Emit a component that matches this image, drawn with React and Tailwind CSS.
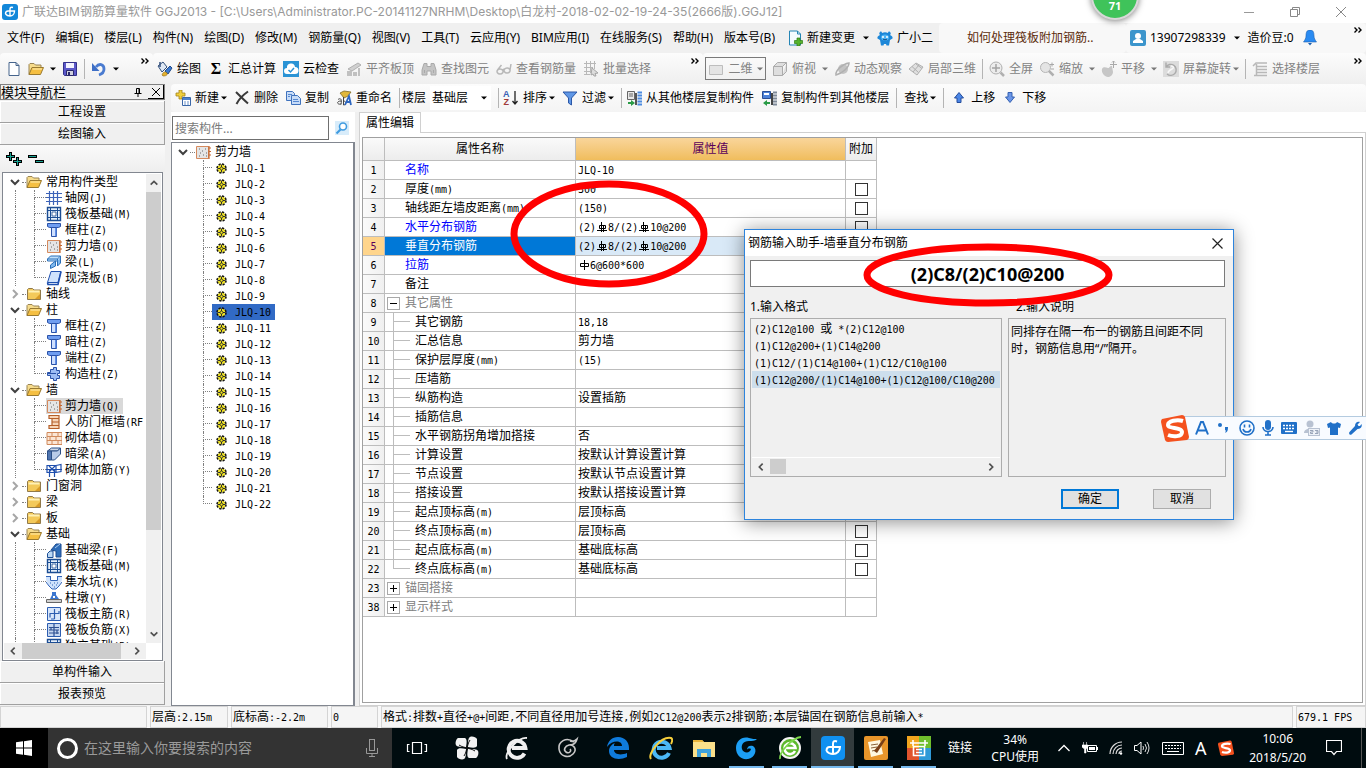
import { useState } from "react";

// 16x16 icons used by the toolbars and the trees
const icons = {
  app: (
    <>
      <rect width="16" height="16" rx="3" fill="#1287d9" />
      <path d="M11 3.500C9 3 8 3.500 8 5v7M3.500 10c0-2 1-3 2.500-3h6.500c0 3-2 5-4.500 5-2 0-3.500-.8-4.500-2" fill="none" stroke="#fff" strokeWidth="1.400" />
    </>
  ),
  page: <path d="M3 1.500h7l3 3v10H3zM10 1.500v3h3" fill="#fff" stroke="#46648c" />,
  folderOpen: (
    <>
      <path d="M1 13.500v-10l1-1h4l1.500 1.500H13v2.500" fill="#f7dc8c" stroke="#9a8454" />
      <path d="M1 13.500 4 6.500h11.500l-3 7z" fill="#f5bf42" stroke="#9a7a30" />
      <path d="M4.500 8H14" stroke="#fff0b8" />
    </>
  ),
  folder: (
    <>
      <path d="M1.500 13.500v-10l1-1h4L8 4h6.500v9.500z" fill="#f3c95a" stroke="#917a4a" />
      <path d="M2.500 5.500h11" stroke="#fff1b5" strokeWidth="2" />
      <path d="M9 13 14 8v5z" fill="#d89b26" />
    </>
  ),
  save: (
    <>
      <path d="M1.500 1.500h13v13h-12l-1-1z" fill="#5b58c9" stroke="#33308a" />
      <path d="M4 2h8v5H4z" fill="#f3f3ff" />
      <path d="M4.500 9.500h7v5h-7z" fill="#cfd0df" stroke="#2a286b" />
      <path d="M6 11h2v3H6z" fill="#2a286b" />
    </>
  ),
  undo: (
    <>
      <path d="M5 6c3-4 8-3 8 2 0 3-2 5-5 6" fill="none" stroke="#4a7bd0" strokeWidth="2.800" />
      <path d="M1 2v8h7.500z" fill="#3e6fc6" />
    </>
  ),
  paint: (
    <>
      <path d="M1 5l5-4 4 5-5 5z" fill="#dfe8f4" stroke="#33507c" />
      <path d="M3 1v5" stroke="#33507c" strokeWidth="1.500" />
      <path d="M8 10l5-5 2 2-4 6z" fill="#3b79cf" stroke="#234c8a" />
      <path d="M5 14c1-3 3-4 5-2 1 2-1 3-4 3z" fill="#e4b22e" stroke="#8a681b" strokeWidth=".6" />
    </>
  ),
  cloud: (
    <>
      <rect width="16" height="16" fill="#2a93d5" />
      <path d="M4 13a3 3 0 0 1 0-6 4 4 0 0 1 8-1 3.500 3.500 0 0 1 0 7z" fill="#fff" />
      <path d="m5.500 9 2 2 3.500-4" fill="none" stroke="#2a93d5" strokeWidth="1.500" />
    </>
  ),
  align: (
    <>
      <path d="M2 8 12 2l3 2-9 6z" fill="#d0d0d0" stroke="#b0b0b0" />
      <path d="M1 10h5v5H1zM7 11h4v4H7zM12 7h2v8h-2z" fill="#c0c0c0" />
    </>
  ),
  binocular: (
    <path d="M3 2.500h3v3h4v-3h3L15 9v5h-5v-4H6v4H1V9zM3.500 9v3M12.500 9v3" fill="#c4c4c4" stroke="#aaa" />
  ),
  glasses: (
    <path d="M4 13a3 2.500 0 1 1 .1 0zM11 12a3 2.500 0 1 1 .1 0zM6.500 9l2-1M1.500 9l4-5M14 9l1-6" fill="none" stroke="#b8b8b8" strokeWidth="1.500" />
  ),
  batch: (
    <>
      <path d="M1 2.500h12M1 6.500h9M1 10.500h8M3.500 0v14M7.500 0v12M11.500 0v8M1 13.500h6" stroke="#b8b8b8" fill="none" />
      <path d="m9 7 6 5-3 .5 1 2.500h-2l-1-2-2 1z" fill="#ddd" stroke="#a5a5a5" />
    </>
  ),
  rect: <path d="M1.500 4.500h13v9h-13z" fill="#e4e4e4" stroke="#bdbdbd" />,
  cube: (
    <path d="M1.500 5.500h9v9h-9zM1.500 5.500l4-4h9l-4 4M14.500 1.500v9l-4 4" fill="#dedede" stroke="#ababab" />
  ),
  orbit: (
    <>
      <circle cx="9" cy="8" r="5" fill="#c3c3c3" />
      <path d="M2 14C1 10 8 3 15 2c0 4-6 10-13 12z" fill="none" stroke="#b0b0b0" strokeWidth="1.500" />
    </>
  ),
  iso: <path d="m1 8 7-6 7 4-6 8zM4 5.500l6.500 6M11 4 5 11M8 3l6 4.500" fill="#e0e0e0" stroke="#b0b0b0" />,
  full: (
    <>
      <circle cx="7" cy="7" r="6" fill="#ececec" stroke="#b0b0b0" />
      <path d="M7 3v8M3 7h8" stroke="#a3a3a3" strokeWidth="1.500" />
      <path d="m11.500 11.500 3.500 3.500" stroke="#b0b0b0" strokeWidth="2.500" />
    </>
  ),
  zoom: (
    <>
      <circle cx="6.500" cy="6.500" r="5" fill="#e4e4e4" stroke="#b5b5b5" />
      <path d="m10 10 4.500 4.500" stroke="#b0b0b0" strokeWidth="2.500" />
      <path d="M11 3.500h4M13 1.500v4M12 8h3" stroke="#a8a8a8" />
    </>
  ),
  pan: (
    <>
      <path d="M1 8c2-3 4-1 6-1s1-2 4-2l1 6c0 3-3 5-5 5-3 0-7-4-6-8z" fill="#c6c6c6" />
      <path d="M12.500 0v7M9 3.500h7M11 1.500l1.500-1.500L14 1.500" stroke="#aaa" fill="none" />
    </>
  ),
  rotate: (
    <>
      <path d="M0 0h16v16H0z" fill="#dcdcdc" />
      <path d="M3 6a5.500 5.500 0 1 1 1 7M3 1.500V6h4" fill="none" stroke="#aaa" strokeWidth="1.400" />
      <path d="M8 5c3 0 3 2 1 3s-4 2-4 4" fill="none" stroke="#f8f8f8" strokeWidth="1.400" />
    </>
  ),
  floors: <path d="m1 5 3-3h11M4 5.500h11M4 8.500h11M4 11.500h11M2 14.500h13M4.500 3v11" fill="none" stroke="#b8b8b8" strokeWidth="1.500" />,
  add: (
    <>
      <path d="M4 0h3v3h3v3H7v3H4V6H1V3h3z" fill="#f0cf3d" stroke="#a2831b" strokeWidth=".8" />
      <path d="M7.500 7.500h8v8h-8z" fill="#fff" stroke="#3a67a8" />
      <path d="M8 8h7v2H8z" fill="#4d82cf" />
      <path d="M9 12h2M12 12h2M9 14h2M12 14h2" stroke="#6a91c8" />
    </>
  ),
  remove: <path d="M2 2c3 3 8 8 12 11.500M14 1.500C9 5 5 9 2.500 14" fill="none" stroke="#3a3a3a" strokeWidth="2" />,
  copy: (
    <>
      <path d="M1.500 1.500h6l2 2v7h-8z" fill="#c7dcf8" stroke="#3f72bd" />
      <path d="M6.500 5.500h6l3 3v6h-9z" fill="#c7dcf8" stroke="#3f72bd" />
      <path d="M8 9.500h5M8 11.500h6M3 4.500h4M3 6.500h2" stroke="#5789d1" />
    </>
  ),
  rename: (
    <>
      <path d="m4 3 4-2 7 1-3 4-4 2z" fill="#e0b73a" stroke="#7d6a25" strokeWidth=".8" />
      <path d="M2 9.500c3-2 4 0 3 5M5 11c-5 0-4 4 0 3M7.500 7v8c3 0 3-4 0-4" fill="none" stroke="#454545" />
      <path d="m9 15 4-9 2 9M10.500 12H15" fill="none" stroke="#2e67c0" strokeWidth="1.800" />
    </>
  ),
  filter: <path d="M1 2h14l-5.500 6v7l-3-2V8z" fill="#5f97e6" stroke="#2b57a7" />,
  floorCopy: (
    <>
      <path d="M1.500 1.500h7v8h-7z" fill="#e8e8e8" stroke="#666" />
      <path d="M3 4h4M3 6h4" stroke="#666" />
      <path d="M9 3h2v12H9z" fill="#555" />
      <path d="M11.500 2.500h4.500M11.500 5.500h4.500M11.500 8.500h4.500M11.500 11.500h4.500M11.500 14.500h4.500" stroke="#4d8be0" strokeWidth="2" />
      <path d="M2 12h3v-2l4 3-4 3v-2H2z" fill="#2a9b46" />
    </>
  ),
  floorCopyTo: (
    <>
      <path d="M1.500 1.500h8v7h-8z" fill="#4d82d8" stroke="#2a4f96" />
      <path d="M3 3h5v2H3z" fill="#fff" />
      <path d="M10 3h2v12h-2z" fill="#444" />
      <path d="M12 2.500h4M12 5.500h4M12 8.500h4M12 11.500h4M12 14.500h4" stroke="#7f8a99" strokeWidth="2" />
      <path d="M9 12H6v-2l-4 3 4 3v-2h3z" fill="#2a9b46" />
    </>
  ),
  up: <path d="M8 2.500 12.500 8H10v4.500H6V8H3.500z" fill="#4b86e6" stroke="#244d9c" />,
  down: <path d="M8 12.500 12.500 7H10V2.500H6V7H3.500z" fill="#6a96e8" stroke="#3560b0" />,
  newChange: (
    <>
      <path d="M2.500 1h8l3 3v11h-11z" fill="#f4fbff" stroke="#2585b5" />
      <path d="M10.500 1v3h3" fill="none" stroke="#2585b5" />
      <path d="M10 8h3v2.500h2.500v3H13V16h-3v-2.500H7.500v-3H10z" fill="#56b32c" stroke="#2f7d14" strokeWidth=".7" />
    </>
  ),
  mascot: (
    <>
      <path d="M3 2c1-1 2 0 2 1 2-1 4-1 6 0 0-1 1-2 2-1s1 2 0 3c2 1 3 2 2.500 3.500L13 10l-1 5.500H9.500L9 14H7l-.5 1.500H4L3 10 .5 8.500C0 7 1 6 3 5 2 4 2 3 3 2z" fill="#1d87d8" />
      <ellipse cx="8" cy="7.500" rx="4" ry="3" fill="#4fb3f3" />
      <circle cx="6" cy="7" r="1" fill="#fff" />
      <circle cx="10" cy="7" r="1" fill="#fff" />
      <path d="M6 9c1 1 3 1 4 0" fill="none" stroke="#124a80" />
    </>
  ),
  user: (
    <>
      <rect width="16" height="16" rx="2" fill="#3c95cc" />
      <circle cx="8" cy="6" r="3" fill="#fff" />
      <path d="M3 13v-2l3-2h4l3 2v2z" fill="#fff" />
    </>
  ),
  bell: (
    <>
      <path d="M8 0c3 0 4 2 4 6 0 2 1 4 2.500 6h-13C3 10 4 8 4 6c0-4 1-6 4-6z" fill="#2a8bf2" stroke="#1c5fae" strokeWidth=".6" />
      <path d="M6 13h4l-2 2.500z" fill="#1c5fae" />
    </>
  ),
  grid: <path d="M0 3.500h14M0 7.500h14M0 11.500h14M3.500 1v14M7.500 1v14M11.500 1v14M14 3.500h2M14 7.500h2M14 11.500h2" stroke="#3d63b8" strokeWidth="1.200" />,
  raft: (
    <>
      <path d="M1.500 1.500h13v13h-13z" fill="#e6f0fb" stroke="#1c4d93" strokeWidth="1.400" />
      <path d="M4.500 2v12M11.500 2v12M2 4.500h12M2 11.500h12" stroke="#1c4d93" />
      <path d="M6 6h4v4H6z" fill="#fff" stroke="#1c4d93" strokeWidth=".8" />
    </>
  ),
  column: (
    <>
      <path d="M1.500 1.500h13v3l-2 1h-9l-2-1z" fill="#6f9df0" stroke="#2a52a8" />
      <path d="M5.500 5.500h5v9h-5z" fill="#cfe0ff" stroke="#2a52a8" />
      <path d="M9 6h1.500v8H9z" fill="#5f8ee6" />
    </>
  ),
  wall: (
    <>
      <path d="M1.500 2.500h12v12h-12z" fill="#e5e5e5" stroke="#d58a5e" />
      <path d="M14.500 4h1.500M14.500 7.500h1.500M14.500 11h1.500M14 2v13" stroke="#c4672f" strokeWidth="1.200" />
      <path d="M4 5h1M7 7h1M10 5h1M5 9h1M8 11h1M11 9h1M4 12h1M11 12h1" stroke="#666" />
    </>
  ),
  beam: (
    <>
      <path d="m1.500 5 3-3h10l-3 3zM1.500 5v2l10 0V5" fill="#bfe0fb" stroke="#2a6fb8" />
      <path d="M4.500 14.500V11l5-4v5zM11.500 7v5l3-3V2" fill="#7db7ee" stroke="#2a6fb8" />
    </>
  ),
  slab: (
    <>
      <path d="M5 1.500h10l-3 11H1.500z" fill="#cfe2fc" stroke="#1f50b0" />
      <path d="m1.500 12.500.5 2h10l3-13" fill="none" stroke="#1f50b0" strokeWidth="1.600" />
    </>
  ),
  structCol: (
    <path d="M4.500 3.500h3v-2h3v3h3v3h-2v2h2v3h-3v2h-3v-2h-3v-3h-3v-3h3zM2 7.500h8" fill="#9dbdf5" stroke="#2a52a8" />
  ),
  doorFrame: (
    <path d="M3 1.500h10v13H3v-3h3v-7H3zM6 4.500h7M6 8h7M6 11.500h7" fill="#f6d5b8" stroke="#b5602a" strokeWidth="1.200" />
  ),
  brick: (
    <path d="M1 2.500h15v12H1zM1 6.500h15M1 10.500h15M6 2.500v4M12 2.500v4M4 6.500v4M10 6.500v4M6 10.500v4M12 10.500v4" fill="#fbe6d5" stroke="#d08a5c" />
  ),
  hiddenBeam: (
    <>
      <path d="m1.500 5 4-3h9l-3 3z" fill="#cfd8e6" stroke="#2b4f86" />
      <path d="M1.500 5h4v9h-4z" fill="#4f75b0" stroke="#2b4f86" />
      <path d="M5.500 5h6l3-3v6l-6 6h-3z" fill="#b8cbe8" stroke="#2b4f86" />
    </>
  ),
  rebar: <path d="M1 3.500h9v7H1zM3.500 15V7M8.500 15V7M10 3.500l5-1v7l-5 1M0 7.500h16M3 4l6 6M9 4l-6 6" fill="none" stroke="#1f4fae" strokeWidth="1.200" />,
  footBeam: (
    <>
      <path d="m5 8 5-6h5v13h-5V9z" fill="#2f6db8" stroke="#1c4d93" />
      <path d="M1.500 15.500v-4L4 9h3v6.500z" fill="#bcd8f5" stroke="#1c4d93" />
      <path d="m9 6 5-4" stroke="#a9cdf3" />
    </>
  ),
  pit: (
    <>
      <path d="M0 2h4v5h8V2h4v4l-3 6-3 3H6l-3-3-3-6z" fill="#cfe2fc" />
      <path d="M0 2.500h4M12 2.500h4M4.500 2v4.500h7V2M0 8l3 4 3 3h4l3-3 3-4" fill="none" stroke="#3264b8" />
      <path d="M4 9h1M8 9h1M11 9h1M6 11h1M10 11h1M8 13h1" stroke="#3264b8" />
    </>
  ),
  pier: (
    <>
      <path d="M6 2h4v3l3 4H4l2-4z" fill="#3c77d0" />
      <path d="M7 6h2v2H7z" fill="#fff" />
      <path d="M.5 9.500h15v3H.5z" fill="#d2d2d2" stroke="#666" />
    </>
  ),
  mainBar: (
    <>
      <path d="M1.500 1.500h13v13h-13z" fill="#d8e6fa" stroke="#2c5db0" />
      <path d="M8.500 3v10M4 11.500V7.500h9V5M8.500 13H5" fill="none" stroke="#2c5db0" strokeWidth="1.200" />
    </>
  ),
  negBar: (
    <>
      <path d="M1.500 1.500h13v13h-13z" fill="#c6d8f2" stroke="#2c5db0" />
      <path d="M8 2v12M3 5.500h10M3 8h10M3 11h10M5 5v3M11 8v4" fill="none" stroke="#2c4f90" strokeWidth="1.200" />
    </>
  ),
};

const Icon = ({ name, className = "h-4 w-4" }) => (
  <svg viewBox="0 0 16 16" className={`shrink-0 ${className}`} aria-hidden="true">
    {icons[name]}
  </svg>
);

const Caret = ({ className = "text-black" }) => (
  <svg viewBox="0 0 6 4" className={`h-1 w-1.5 shrink-0 ${className}`} aria-hidden="true">
    <path d="M0 .5h6L3 3.500z" fill="currentColor" />
  </svg>
);

const Chevron = ({ dir = "down", className = "h-3 w-3 text-[#404040]" }) => {
  const paths = {
    down: "m2 4 4 4 4-4",
    up: "m2 8 4-4 4 4",
    left: "M8 2 4 6l4 4",
    right: "m4 2 4 4-4 4",
  };
  return (
    <svg viewBox="0 0 12 12" className={`shrink-0 ${className}`} aria-hidden="true">
      <path d={paths[dir]} fill="none" stroke="currentColor" strokeWidth="2" />
    </svg>
  );
};

const More = () => (
  <svg viewBox="0 0 8 6" className="mb-4 h-1.5 w-2 shrink-0" aria-hidden="true">
    <path d="m.5.5 2.500 2.500L.5 5.500M4.500.5 7 3 4.500 5.500" fill="none" stroke="#000" strokeWidth="1.400" />
  </svg>
);

const Sep = () => <span className="h-5 w-px shrink-0 bg-[#b4b4b4]"></span>;

// Latin runs go in a half width mono face, so that two of them fill one Chinese glyph
const Mono = ({ children }) =>
  children.split(/([\x20-\x7e]+)/).map((part, i) =>
    i % 2 ? (
      <span key={i} className="font-['DejaVu_Sans_Mono',monospace] text-[10px] leading-none whitespace-pre">
        {part}
      </span>
    ) : (
      part
    ),
  );

const RebarSign = ({ grade }) => (
  <svg viewBox="0 0 12 12" className="inline h-3 w-3 align-[-2px]" role="img" aria-label={grade === 3 ? "HRB400" : "HPB300"}>
    {grade === 3 ? (
      <path d="M3.500 4.500h6v3h-6zM1 9.500h10M5.500 1v10M7.500 4v7" fill="none" stroke="#000" />
    ) : (
      <path d="M2.500 4.500h8v3h-8zM6.500 1v10" fill="none" stroke="#000" />
    )}
  </svg>
);

const Tool = ({ icon, label, caret, disabled }) => (
  <button className={`flex shrink-0 items-center gap-1 whitespace-nowrap ${disabled ? "text-[#838383]" : "text-black"}`}>
    {icon === "sigma" ? (
      <span className="w-4 text-center font-['Liberation_Serif',serif] text-base leading-4 font-bold">Σ</span>
    ) : icon === "sort" ? (
      <span className="flex w-4 items-center">
        <span className="flex flex-col font-['Liberation_Sans',sans-serif] text-[9px] leading-2 font-bold text-[#3a62b5]">
          A<span className="text-[#a03a3a]">Z</span>
        </span>
        <svg viewBox="0 0 6 16" className="ml-0.5 h-4 w-1.5" aria-hidden="true">
          <path d="M3 1v13M.5 11 3 14l2.500-3" fill="none" stroke="#222" strokeWidth="1.300" />
        </svg>
      </span>
    ) : (
      icon && <Icon name={icon} />
    )}
    {label && <span>{label}</span>}
    {caret && <Caret className={disabled ? "-ml-0.5 text-[#777]" : "-ml-0.5 text-black"} />}
  </button>
);

const menus = [
  "文件(F)", "编辑(E)", "楼层(L)", "构件(N)", "绘图(D)", "修改(M)", "钢筋量(Q)",
  "视图(V)", "工具(T)", "云应用(Y)", "BIM应用(I)", "在线服务(S)", "帮助(H)", "版本号(B)",
];

const navTree = [
  { label: "常用构件类型", open: true, items: [["grid", "轴网(J)"], ["raft", "筏板基础(M)"], ["column", "框柱(Z)"], ["wall", "剪力墙(Q)"], ["beam", "梁(L)"], ["slab", "现浇板(B)"]] },
  { label: "轴线" },
  { label: "柱", open: true, items: [["column", "框柱(Z)"], ["column", "暗柱(Z)"], ["column", "端柱(Z)"], ["structCol", "构造柱(Z)"]] },
  { label: "墙", open: true, active: 0, items: [["wall", "剪力墙(Q)"], ["doorFrame", "人防门框墙(RF"], ["brick", "砌体墙(Q)"], ["hiddenBeam", "暗梁(A)"], ["rebar", "砌体加筋(Y)"]] },
  { label: "门窗洞" },
  { label: "梁" },
  { label: "板" },
  { label: "基础", open: true, items: [["footBeam", "基础梁(F)"], ["raft", "筏板基础(M)"], ["pit", "集水坑(K)"], ["pier", "柱墩(Y)"], ["mainBar", "筏板主筋(R)"], ["negBar", "筏板负筋(X)"], ["raft", "独立基础(P)"]] },
];

const rows = [
  { n: 1, name: "名称", value: "JLQ-10", kind: "key", noCheck: true },
  { n: 2, name: "厚度(mm)", value: "300" },
  { n: 3, name: "轴线距左墙皮距离(mm)", value: "(150)" },
  { n: 4, name: "水平分布钢筋", value: "rebar", kind: "key" },
  { n: 5, name: "垂直分布钢筋", value: "rebar", kind: "key" },
  { n: 6, name: "拉筋", value: "tie", kind: "key" },
  { n: 7, name: "备注", value: "" },
  { n: 8, name: "其它属性", value: "", kind: "group", sign: "−", noCheck: true },
  { n: 9, name: "其它钢筋", value: "18,18", child: true },
  { n: 10, name: "汇总信息", value: "剪力墙", child: true },
  { n: 11, name: "保护层厚度(mm)", value: "(15)", child: true },
  { n: 12, name: "压墙筋", value: "", child: true },
  { n: 13, name: "纵筋构造", value: "设置插筋", child: true },
  { n: 14, name: "插筋信息", value: "", child: true },
  { n: 15, name: "水平钢筋拐角增加搭接", value: "否", child: true },
  { n: 16, name: "计算设置", value: "按默认计算设置计算", child: true },
  { n: 17, name: "节点设置", value: "按默认节点设置计算", child: true },
  { n: 18, name: "搭接设置", value: "按默认搭接设置计算", child: true },
  { n: 19, name: "起点顶标高(m)", value: "层顶标高", child: true },
  { n: 20, name: "终点顶标高(m)", value: "层顶标高", child: true },
  { n: 21, name: "起点底标高(m)", value: "基础底标高", child: true },
  { n: 22, name: "终点底标高(m)", value: "基础底标高", child: true, last: true },
  { n: 23, name: "锚固搭接", value: "", kind: "group", sign: "+", noCheck: true },
  { n: 38, name: "显示样式", value: "", kind: "group", sign: "+", noCheck: true },
];

// dotted elbow that joins a tree item to its parent
const Elbow = ({ last, className }) => (
  <span className={`flex h-4 shrink-0 flex-col ${className}`}>
    <span className="h-2 border-b border-l border-dotted border-[#808080]"></span>
    {!last && <span className="h-2 border-l border-dotted border-[#808080]"></span>}
  </span>
);

const TitleBar = () => (
  <header className="flex h-[23px] shrink-0 items-center bg-white pl-0.5 text-[#999]">
    <Icon name="app" />
    <h1 className="ml-1 flex-1 truncate font-['Inter','Noto_Sans_CJK_SC',sans-serif]">
      广联达BIM钢筋算量软件 GGJ2013 - [C:\Users\Administrator.PC-20141127NRHM\Desktop\白龙村-2018-02-02-19-24-35(2666版).GGJ12]
    </h1>
    <div className="flex items-center gap-9 pr-5">
      <button aria-label="最小化">
        <svg viewBox="0 0 10 10" className="h-2.5 w-2.5"><path d="M0 5.500h10" stroke="#999" /></svg>
      </button>
      <button aria-label="还原">
        <svg viewBox="0 0 10 10" className="h-2.5 w-2.5"><path d="M.5 2.500h7v7h-7zM2.500 2.500v-2h7v7h-2" fill="none" stroke="#888" /></svg>
      </button>
      <button aria-label="关闭">
        <svg viewBox="0 0 10 10" className="h-2.5 w-2.5"><path d="m0 0 10 10M10 0 0 10" stroke="#888" /></svg>
      </button>
    </div>
  </header>
);

const MenuBar = () => (
  <div className="flex h-[30px] shrink-0 items-center">
    <nav className="flex items-center gap-[11px] pl-[7px]">
      {menus.map((m) => (
        <button key={m} className="whitespace-nowrap">{m}</button>
      ))}
    </nav>
    <div className="ml-3 flex items-center gap-2">
      <Tool icon="newChange" label="新建变更" />
      <Caret />
      <Tool icon="mascot" label="广小二" />
    </div>
    <div className="ml-1.5 flex h-full flex-1 items-center rounded bg-[#f8f8f8] pl-7">
      <a href="#tip" className="whitespace-nowrap text-[#5c2c0c]">如何处理筏板附加钢筋..</a>
    </div>
    <div className="flex h-full w-60 items-center gap-2 rounded bg-[#f8f8f8] pr-1 pl-1">
      <Tool icon="user" label="13907298339" />
      <Caret />
      <span>造价豆:0</span>
      <Icon name="bell" />
      <span className="flex-1"></span>
      <More />
    </div>
  </div>
);

const MainToolbar = () => (
  <div className="flex h-[31px] shrink-0 bg-[#f0f0f0]">
    <div className="flex w-[153px] shrink-0 items-center gap-1.5 rounded bg-linear-to-b from-[#fcfcfc] to-[#efefef] pr-1 pl-1.5">
      <Tool icon="page" />
      <Tool icon="folderOpen" />
      <Caret />
      <Tool icon="save" />
      <Sep />
      <Tool icon="undo" />
      <Caret />
      <span className="flex-1"></span>
      <More />
    </div>
    <div className="flex min-w-0 flex-1 items-center gap-[7px] rounded bg-linear-to-b from-[#fcfcfc] to-[#efefef] pr-1 pl-1">
      <Tool icon="paint" label="绘图" />
      <Tool icon="sigma" label="汇总计算" />
      <Tool icon="cloud" label="云检查" />
      <Tool icon="align" label="平齐板顶" disabled />
      <Tool icon="binocular" label="查找图元" disabled />
      <Tool icon="glasses" label="查看钢筋量" disabled />
      <Tool icon="batch" label="批量选择" disabled />
      <span className="flex-1"></span>
      <More />
    </div>
    <div className="flex w-[663px] shrink-0 items-center gap-1.5 rounded bg-linear-to-b from-[#fcfcfc] to-[#efefef] pr-1 pl-0.5">
      <button className="flex h-[23px] w-[61px] shrink-0 items-center justify-between border border-[#7a7a7a] px-0.5 whitespace-nowrap text-[#838383]">
        <Icon name="rect" />
        二维
        <Caret className="text-[#777]" />
      </button>
      <Tool icon="cube" label="俯视" disabled />
      <Caret className="text-[#777]" />
      <Tool icon="orbit" label="动态观察" disabled />
      <Tool icon="iso" label="局部三维" disabled />
      <Sep />
      <Tool icon="full" label="全屏" disabled />
      <Tool icon="zoom" label="缩放" disabled />
      <Caret className="text-[#777]" />
      <Tool icon="pan" label="平移" disabled />
      <Caret className="text-[#777]" />
      <Tool icon="rotate" label="屏幕旋转" caret disabled />
      <Sep />
      <Tool icon="floors" label="选择楼层" disabled />
      <span className="flex-1"></span>
      <More />
    </div>
  </div>
);

const EditToolbar = () => (
  <div className="flex h-7 shrink-0 items-center gap-[7px] rounded bg-linear-to-b from-[#fcfcfc] to-[#f4f4f4] pl-1">
    <Tool icon="add" label="新建" caret />
    <Tool icon="remove" label="删除" />
    <Tool icon="copy" label="复制" />
    <Tool icon="rename" label="重命名" />
    <div className="flex items-center gap-0.5">
      <Sep />
      <label htmlFor="floor">楼层</label>
      <div className="ml-0.5 flex items-center bg-white">
        <select id="floor" className="h-6 w-[61px] appearance-none bg-transparent pl-0.5">
          <option>基础层</option>
        </select>
        <span className="pointer-events-none -ml-2.5 w-2.5"><Caret /></span>
      </div>
    </div>
    <div className="flex items-center gap-1">
      <Sep />
      <Tool icon="sort" label="排序" caret />
    </div>
    <Tool icon="filter" label="过滤" caret />
    <div className="flex items-center gap-1">
      <Sep />
      <Tool icon="floorCopy" label="从其他楼层复制构件" />
    </div>
    <Tool icon="floorCopyTo" label="复制构件到其他楼层" />
    <Sep />
    <Tool label="查找" caret />
    <Sep />
    <Tool icon="up" label="上移" />
    <Tool icon="down" label="下移" />
  </div>
);

const NavButton = ({ children }) => (
  <button className="h-[22px] w-full shrink-0 border-r border-b border-[#a0a0a0] bg-[#f0f0f0] text-center leading-[22px] shadow-[inset_1px_1px_0_#fff]">
    {children}
  </button>
);

const NavPanel = () => (
  <aside className="flex w-[165px] shrink-0 flex-col bg-[#f0f0f0] pb-px">
    <div className="flex h-4 shrink-0 items-center border border-[#808080]">
      <h2 className="flex-1 text-[13px] leading-3 whitespace-nowrap">模块导航栏</h2>
      <button aria-label="固定">
        <svg viewBox="0 0 8 9" className="mr-1.5 h-[9px] w-2"><path d="M2.500 5V.5h3V5M.500 5.500h7M4 5.500V9M5 1v4" fill="none" stroke="#000" /></svg>
      </button>
      <button aria-label="关闭导航栏" className="flex h-3.5 w-4 items-center justify-center border-r border-b border-black">
        <svg viewBox="0 0 8 8" className="h-2 w-2"><path d="m0 0 8 8M8 0 0 8" stroke="#000" /></svg>
      </button>
    </div>
    <div className="h-px shrink-0"></div>
    <NavButton>工程设置</NavButton>
    <NavButton>绘图输入</NavButton>
    <div className="flex h-[27px] shrink-0 items-center gap-1.5 bg-linear-to-b from-[#fafafa] to-[#eee] pl-1.5">
      <button aria-label="全部展开">
        <svg viewBox="0 0 16 14" className="h-3.5 w-4"><path d="M4.500 0v9M0 4.500h9M11.500 5v9M7 9.500h9" stroke="#000" strokeWidth="3" /><path d="M4.500 1v7M1 4.500h7M11.500 6v7M8 9.500h7" stroke="#1aa394" /></svg>
      </button>
      <button aria-label="全部折叠">
        <svg viewBox="0 0 16 14" className="h-3.5 w-4"><path d="M0 4.500h9M7 9.500h9" stroke="#000" strokeWidth="3" /><path d="M1 4.500h7M8 9.500h7" stroke="#1aa394" /></svg>
      </button>
    </div>
    <div className="mx-0.5 flex min-h-0 flex-1 flex-col border border-[#828790] bg-white p-px">
      <div className="flex min-h-0 flex-1">
        <ul className="min-w-0 flex-1 overflow-hidden whitespace-nowrap">
          {navTree.map((g) => (
            <li key={g.label}>
              <div className="flex h-4 items-center pl-[5px]">
                <Chevron dir={g.open ? "down" : "right"} className={g.open ? "h-3 w-3 text-[#404040]" : "h-3 w-3 text-[#a6a6a6]"} />
                <span className="ml-px w-1 border-b border-dotted border-[#808080]"></span>
                <Icon name={g.open ? "folderOpen" : "folder"} />
                <span className="ml-1">{g.label}</span>
              </div>
              <ul>
                {g.items?.map(([icon, label], i) => (
                  <li key={label} className="flex h-4 items-center pl-[11px]">
                    <span className="h-4 w-[19px] shrink-0 border-l border-dotted border-[#808080]"></span>
                    <Elbow last={i === g.items.length - 1} className="w-3" />
                    <span className={g.active === i ? "flex h-4 items-center bg-[#d9d9d9] pr-1" : "flex h-4 items-center"}>
                      <Icon name={icon} />
                      <span className="ml-[3px] leading-4"><Mono>{label}</Mono></span>
                    </span>
                  </li>
                ))}
              </ul>
            </li>
          ))}
        </ul>
        <div className="flex w-[15px] shrink-0 flex-col items-center bg-[#f0f0f0]">
          <Chevron dir="up" className="my-1 h-2.5 w-2.5 text-[#505050]" />
          <div className="w-full flex-[340] bg-[#cdcdcd]"></div>
          <div className="flex-[95]"></div>
          <Chevron dir="down" className="my-1 h-2.5 w-2.5 text-[#505050]" />
        </div>
      </div>
      <div className="mr-[15px] flex h-4 shrink-0 items-center bg-[#f0f0f0]">
        <Chevron dir="left" className="mx-1 h-2.5 w-2.5 text-[#505050]" />
        <div className="h-full flex-[102] bg-[#cdcdcd]"></div>
        <div className="flex-[7]"></div>
        <Chevron dir="right" className="mx-1 h-2.5 w-2.5 text-[#505050]" />
      </div>
    </div>
    <NavButton>单构件输入</NavButton>
    <NavButton>报表预览</NavButton>
  </aside>
);

const Gear = () => (
  <svg viewBox="0 0 11 11" className="h-[11px] w-[11px] shrink-0" aria-hidden="true">
    <circle cx="5.500" cy="5.500" r="4" fill="#f2e526" />
    <circle cx="5.500" cy="5.500" r="4.500" fill="none" stroke="#111" strokeWidth="1.600" strokeDasharray="2.200 1.330" />
    <path d="M5.500 1.500v8M1.500 5.500h8" stroke="#333" />
    <circle cx="5.500" cy="5.500" r="1.500" fill="#f2e526" stroke="#222" strokeWidth=".8" />
  </svg>
);

const ComponentPanel = () => {
  const [active, setActive] = useState(10);
  return (
    <section className="flex w-[184px] shrink-0 flex-col">
      <div className="flex h-[30px] shrink-0 items-center gap-1.5 bg-white pt-0.5 pl-px">
        <input
          type="text"
          aria-label="搜索构件"
          placeholder="搜索构件..."
          className="h-6 w-[157px] border border-[#6f6f6f] bg-white px-0.5 placeholder:text-[#7a7a7a]"
        />
        <button aria-label="搜索" className="flex h-3.5 w-3.5 items-center justify-center bg-[#d8ecfa]">
          <svg viewBox="0 0 14 14" className="h-3.5 w-3.5"><circle cx="8" cy="5.500" r="3.500" fill="#fff" stroke="#3f9be0" strokeWidth="1.600" /><path d="m5.500 8.500-4 4" stroke="#3f9be0" strokeWidth="2.200" /></svg>
        </button>
      </div>
      <div className="min-h-0 flex-1 overflow-hidden border border-r-2 border-[#828790] bg-white pt-px">
        <div className="flex h-4 items-center pl-[5px]">
          <Chevron />
          <span className="ml-px w-[5px] border-b border-dotted border-[#808080]"></span>
          <Icon name="wall" />
          <span className="ml-1">剪力墙</span>
        </div>
        <ul>
          {Array.from({ length: 22 }, (_, i) => i + 1).map((n) => (
            <li key={n} className="flex h-4 items-center pl-[31px]">
              <Elbow last={n === 22} className="w-[9px]" />
              <button
                onClick={() => setActive(n)}
                className={n === active ? "flex h-4 items-center gap-2 bg-[#316ac5] px-1" : "flex h-4 items-center gap-2 px-1"}
              >
                <Gear />
                <span className="leading-4"><Mono>{`JLQ-${n}`}</Mono></span>
              </button>
            </li>
          ))}
        </ul>
      </div>
    </section>
  );
};

const CellValue = ({ value }) => {
  if (value === "rebar") {
    return (
      <>
        <Mono>(2)</Mono><RebarSign grade={3} /><Mono>8/(2)</Mono><RebarSign grade={3} /><Mono>10@200</Mono>
      </>
    );
  }
  if (value === "tie") {
    return (
      <>
        <RebarSign grade={1} /><Mono>6@600*600</Mono>
      </>
    );
  }
  return <Mono>{value}</Mono>;
};

const PropertyTable = () => (
  <table className="w-[514px] table-fixed border-separate border-spacing-0 text-left">
    <colgroup>
      <col className="w-[22px]" />
      <col className="w-[191px]" />
      <col className="w-[270px]" />
      <col className="w-[31px]" />
    </colgroup>
    <thead>
      <tr className="h-[23px] bg-linear-to-b from-[#fafafa] to-[#ececec] text-center">
        <th className="border-r border-b border-[#bdbdbd] p-0"></th>
        <th className="border-r border-b border-[#bdbdbd] p-0 font-normal">属性名称</th>
        <th className="border-r border-b border-[#bdbdbd] bg-linear-to-b from-[#f9d59a] to-[#f0bd5c] p-0 font-normal text-[#5a005a]">属性值</th>
        <th className="border-r border-b border-[#bdbdbd] p-0 font-normal whitespace-nowrap">附加</th>
      </tr>
    </thead>
    <tbody>
      {rows.map((r) => {
        const active = r.n === 5;
        const color = active ? "bg-[#0078d7] text-white" : r.kind === "key" ? "text-[#0000ff]" : r.kind === "group" ? "text-[#808080]" : "";
        return (
          <tr key={r.n} className="h-[19px] leading-4">
            <td className={`border-r border-b border-[#bdbdbd] p-0 text-center ${active ? "bg-[#ffd58c] text-[#5a005a]" : "bg-linear-to-r from-[#fafafa] to-[#f0f0f0]"}`}>
              <Mono>{String(r.n)}</Mono>
            </td>
            <td className={`border-r border-b border-[#bdbdbd] p-0 whitespace-nowrap ${color}`}>
              <div className="flex h-[18px] items-center overflow-hidden">
                {r.child ? (
                  <span className="ml-2 flex h-full w-[17px] flex-col">
                    <span className="h-[9px] border-b border-l border-[#bdbdbd]"></span>
                    {!r.last && <span className="h-[9px] border-l border-[#bdbdbd]"></span>}
                  </span>
                ) : r.sign ? (
                  <button aria-label={r.sign === "+" ? `展开${r.name}` : `折叠${r.name}`} className="ml-0.5 flex h-[13px] w-[13px] items-center justify-center border border-[#a8a8a8] bg-white">
                    <svg viewBox="0 0 7 7" className="h-[7px] w-[7px]"><path d={r.sign === "+" ? "M0 3.500h7M3.500 0v7" : "M0 3.500h7"} stroke="#000" /></svg>
                  </button>
                ) : (
                  <span className="w-[15px]"></span>
                )}
                <span className="ml-[5px]"><Mono>{r.name}</Mono></span>
              </div>
            </td>
            <td className={`border-r border-b border-[#bdbdbd] py-0 pr-0 pl-0.5 whitespace-nowrap ${active ? "bg-[#d9e9f7]" : ""}`}>
              <CellValue value={r.value} />
            </td>
            <td className="border-r border-b border-[#bdbdbd] p-0">
              {!r.noCheck && (
                <input type="checkbox" aria-label={`附加 ${r.name}`} className="mx-auto block h-[13px] w-[13px] appearance-none border border-[#333] bg-white" />
              )}
            </td>
          </tr>
        );
      })}
    </tbody>
  </table>
);

const Editor = () => (
  <main className="ml-1 flex min-w-0 flex-1 flex-col">
    <div className="flex h-[21px] shrink-0">
      <button className="w-[62px] border border-b-0 border-[#d0d0d0] bg-white leading-5">属性编辑</button>
      <div className="flex-1 border-b border-[#d0d0d0] bg-white"></div>
    </div>
    <div className="min-h-0 flex-1 border-x border-b border-[#d0d0d0] bg-white px-0.5 pt-1 pb-0.5">
      <div className="h-full overflow-hidden border border-[#a0a0a0] bg-white">
        <PropertyTable />
      </div>
    </div>
  </main>
);

const formats = [
  "(2)C12@100 或 *(2)C12@100",
  "(1)C12@200+(1)C14@200",
  "(1)C12/(1)C14@100+(1)C12/C10@100",
  "(1)C12@200/(1)C14@100+(1)C12@100/C10@200",
];

const InputDialog = () => (
  <div role="dialog" aria-labelledby="dlg-title" className="absolute top-[229px] left-[744px] w-[490px] border border-[#2d84dd] bg-[#f0f0f0] shadow-[0_2px_18px_rgba(0,0,0,0.45)]">
    <div className="flex h-[26px] items-center justify-between bg-white pr-2.5 pl-[3px]">
      <h2 id="dlg-title">钢筋输入助手-墙垂直分布钢筋</h2>
      <button aria-label="关闭对话框">
        <svg viewBox="0 0 11 11" className="h-[11px] w-[11px]"><path d="m.5.5 10 10M10.500.5l-10 10" stroke="#222" strokeWidth="1.200" /></svg>
      </button>
    </div>
    <div className="px-[5px] pt-1 pb-2.5">
      <input
        type="text"
        aria-label="钢筋信息"
        defaultValue="(2)C8/(2)C10@200"
        className="h-[27px] w-[475px] border border-[#7a7a7a] bg-white text-center text-lg leading-6 font-bold"
      />
      <div className="mt-3 grid grid-cols-[252px_218px] gap-x-1.5 gap-y-[3px]">
        <h3 className="leading-4">1.输入格式</h3>
        <h3 className="pl-2 leading-4">2.输入说明</h3>
        <div className="flex h-[159px] flex-col border border-[#adadad] p-px">
          <ul className="flex-1">
            {formats.map((f, i) => (
              <li key={f} className={i === 3 ? "h-[17px] bg-[#cddeec] pl-0.5 leading-[17px] whitespace-nowrap" : "h-[17px] pl-0.5 leading-[17px] whitespace-nowrap"}>
                <Mono>{f}</Mono>
              </li>
            ))}
          </ul>
          <div className="flex h-[18px] items-center border-t border-white">
            <Chevron dir="left" className="mx-1 h-2.5 w-2.5 text-[#505050]" />
            <div className="h-[15px] w-4 bg-[#cdcdcd]"></div>
            <span className="flex-1"></span>
            <Chevron dir="right" className="mx-1 h-2.5 w-2.5 text-[#505050]" />
          </div>
        </div>
        <p className="border border-[#adadad] pt-1 pl-0.5 leading-[17px]">
          同排存在隔一布一的钢筋且间距不同
          <br />
          时，钢筋信息用<span className="font-['Noto_Sans',sans-serif]">“/”</span>隔开。
        </p>
      </div>
      <div className="mt-3 flex justify-end gap-[34px] pr-[17px]">
        <button className="h-5 w-[58px] border-2 border-[#0078d7] bg-[#e1e1e1] leading-4">确定</button>
        <button className="h-5 w-[58px] border border-[#adadad] bg-[#e1e1e1] leading-[18px]">取消</button>
      </div>
    </div>
  </div>
);

const SogouLogo = ({ className }) => (
  <svg viewBox="0 0 28 28" className={className} aria-hidden="true">
    <path d="M1 5 21 1q2 0 3 2l4 20q0 2-2 3L7 28q-2 0-3-2L0 8q0-2 1-3z" fill="#f4511e" />
    <path d="M22 7C16 5 7 7 7 11s14 2 14 7-9 5-14 3" fill="none" stroke="#fff" strokeWidth="4" />
  </svg>
);

const ImeBar = () => (
  <div className="absolute top-[413px] right-0 flex h-[29px] items-center">
    <SogouLogo className="z-10 -mr-2 h-[28px] w-[28px]" />
    <div className="flex h-6 items-center gap-[7px] border-y border-[#b4cbe0] bg-[#f8fbff] pr-1 pl-3.5">
      <svg viewBox="0 0 14 14" className="h-3.5 w-3.5"><path d="M1 13.500 6 1h2l5 12.500M3 9.500h8" fill="none" stroke="#2070c8" strokeWidth="2" /></svg>
      <svg viewBox="0 0 14 14" className="h-3.5 w-3.5"><circle cx="4" cy="4" r="2" fill="#2070c8" /><path d="M9 6h3c0 4-1 5-3 6 1-2 1-3 0-3z" fill="#2070c8" /></svg>
      <svg viewBox="0 0 16 16" className="ml-0.5 h-4 w-4"><circle cx="8" cy="8" r="7" fill="none" stroke="#2070c8" strokeWidth="1.600" /><path d="M5.500 4.500v3M10.500 4.500v3M4 9c1 4 7 4 8 0" fill="none" stroke="#2070c8" strokeWidth="1.600" /></svg>
      <svg viewBox="0 0 12 16" className="h-4 w-3"><rect x="3" width="6" height="10" rx="3" fill="#2070c8" /><path d="M1 7c0 6 10 6 10 0M6 11v4M3 15h6" fill="none" stroke="#2070c8" strokeWidth="1.600" /></svg>
      <svg viewBox="0 0 16 14" className="h-3.5 w-4"><rect y="1" width="16" height="12" rx="1" fill="#2070c8" /><path d="M2 4.500h12M2 7.500h12" stroke="#fff" strokeWidth="1.600" strokeDasharray="2 1" /><path d="M4 10.500h8" stroke="#fff" strokeWidth="1.400" /></svg>
      <svg viewBox="0 0 16 16" className="h-4 w-4"><circle cx="6" cy="4" r="3.500" fill="#b8c2d2" /><path d="M0 13c0-6 12-6 12 0z" fill="#b8c2d2" /><rect x="4.500" y="8.500" width="11" height="7" fill="#eef2f8" stroke="#b8c2d2" /><path d="M6 10.500h3v1.500H6.500v1.500H9M11 10.500h3v3h-3M12 12h2" fill="none" stroke="#98a4b8" /></svg>
      <svg viewBox="0 0 14 14" className="h-3.5 w-3.5"><path d="M4 1c1 2 5 2 6 0l4 2-1 4-2-.5V14H3V6.500L1 7 0 3z" fill="#2070c8" /></svg>
      <svg viewBox="0 0 14 14" className="h-3.5 w-3.5"><path d="M12 1 9.500 3.500l1 1.500L12 5l1.500-2c1 3-1 5-4 5l-6 5.500c-2 1-3-1-2-2.500L7 5c0-3 2-5 5-4z" fill="#2070c8" /></svg>
    </div>
  </div>
);

const StatusBar = () => (
  <footer className="flex h-[22px] shrink-0 gap-[3px] bg-[#f8f8f8] leading-5 whitespace-nowrap">
    <span className="w-[147px] border border-[#d4d4d4] bg-[#f5f5f5]"></span>
    <span className="w-[78px] border border-[#d4d4d4] bg-[#f5f5f5] pl-px"><Mono>层高:2.15m</Mono></span>
    <span className="w-[97px] border border-[#d4d4d4] bg-[#f5f5f5] pl-px"><Mono>底标高:-2.2m</Mono></span>
    <span className="w-[47px] border border-[#d4d4d4] bg-[#f5f5f5] pl-px"><Mono>0</Mono></span>
    <span className="flex-1 border border-[#d4d4d4] bg-[#f5f5f5] pl-px">
      <Mono>格式:排数+直径+@+间距,不同直径用加号连接,例如2C12@200表示2排钢筋;本层锚固在钢筋信息前输入*</Mono>
    </span>
    <span className="w-[70px] border border-[#d4d4d4] bg-[#f5f5f5] pl-px"><Mono>679.1 FPS</Mono></span>
  </footer>
);

const apps = {
  taskView: <path d="M7.500 6.500h9v11h-9zM4.500 8.500h-2v7h2M19.500 8.500h2v7h-2" fill="none" stroke="#fff" strokeWidth="1.200" />,
  fan: (
    <>
      <path d="M3 2h7c2 1 2 4 1 9C6 11 2 11 1 9s0-6 2-7zM22 3v7c-1 2-4 2-9 1 0-5 0-9 2-10s6 0 7 2zM21 22h-7c-2-1-2-4-1-9 5 0 9 0 10 2s0 6-2 7zM2 21v-7c1-2 4-2 9-1 0 5 0 9-2 10s-6 0-7-2z" fill="#f2f2f2" />
      <path d="M4 9c3 2 5 2 8 3M15 4c-2 3-2 5-3 8M20 15c-3-2-5-2-8-3M9 20c2-3 2-5 3-8" fill="none" stroke="#111" />
    </>
  ),
  ieWhite: (
    <>
      <path d="M19.500 17.500A8.500 8.500 0 1 1 20.500 12H7" fill="none" stroke="#f0f0f0" strokeWidth="3.800" />
      <path d="M2 23C-1 17 13 1 22 2" fill="none" stroke="#f0f0f0" strokeWidth="1.800" />
    </>
  ),
  swirlGrey: (
    <path d="M19 6C11 0 3 6 4 13s9 10 14 5 0-10-4-9-6 5-3 7 6-1 4-3M15 5c3 1 5 0 7-2-1 4-3 6-7 6" fill="none" stroke="#c8c8c8" strokeWidth="1.600" />
  ),
  edge: (
    <path d="M1 11C2 5 6 1 12 1c7 0 11 5 11 11v2H8c0 4 6 6 13 3v4c-8 4-18 2-18-6 0-4 3-7 6-8-1 1-1 2-1 3h8c0-6-10-6-15 1z" fill="#0f7bdc" />
  ),
  ie: (
    <>
      <path d="M20 17a8 8 0 1 1 .5-5H8" fill="none" stroke="#4bb8f5" strokeWidth="4" />
      <path d="M2 23C-2 18 12 0 22 2c2 1 1 4 0 6" fill="none" stroke="#f6cf3c" strokeWidth="2" />
    </>
  ),
  explorer: (
    <>
      <path d="M1 4h9l2 2h11v15H1z" fill="#fbe08a" />
      <path d="M1 4h9l2 2H1z" fill="#e8b33a" />
      <path d="M5 13h14v8h-4v-4H9v4H5z" fill="#3fa2dc" />
    </>
  ),
  swirlBlue: (
    <path d="M22 3c-2 2-5 2-8 2C8 5 6 9 7 13s8 5 9 0c-2-1-4 0-4 1 0-4 3-5 6-4 5 3 2 12-5 13S1 19 1 12 7 0 14 2c3 1 6 1 8 1z" fill="#1c9ff5" />
  ),
  ieGreen: (
    <>
      <circle cx="12" cy="12" r="10" fill="#5cb82c" stroke="#f4f4f4" strokeWidth="2" />
      <path d="M17 15a5.500 5.500 0 1 1 .5-3H8" fill="none" stroke="#fff" strokeWidth="2.600" />
      <path d="M2 23C1 16 14 2 23 1" fill="none" stroke="#7bd84a" strokeWidth="1.800" />
    </>
  ),
  ggj: (
    <>
      <rect width="24" height="24" rx="4" fill="#1090f0" />
      <path d="M16 5.500c-3-1-4 0-4 2.500v10M5.500 15c0-3 1-4 3-4H19c0 4-3 7-7 7-3 0-5-1-6.500-3" fill="none" stroke="#fff" strokeWidth="2" />
    </>
  ),
  note: (
    <>
      <rect width="24" height="24" rx="2" fill="#e8952a" />
      <path d="m4 6 12-2 3 14-12 3z" fill="#fff8e0" />
      <path d="m7 9 7-1M7 12l6-1M8 15l4-1" stroke="#8a6238" />
      <path d="m10 15 10-13 2 1-9 14z" fill="#7a3f16" />
    </>
  ),
  calendar: (
    <>
      <path d="M0 0h12v12H0z" fill="#f2a51e" />
      <path d="M12 0h12v12H12z" fill="#6fbf2c" />
      <path d="M0 12h12v12H0z" fill="#e0532d" />
      <path d="M12 12h12v12H12z" fill="#2f9ad8" />
      <path d="M6.500 10.500h11v9h-11zM3 7h18M6 4v6M18 4v6M9 13.500h6M9 16.500h6" fill="none" stroke="#fff" strokeWidth="1.600" />
    </>
  ),
};

const TaskButton = ({ app, label, state = "" }) => (
  <button
    aria-label={label}
    className={`flex h-full w-[43px] shrink-0 flex-col items-center justify-between pt-2 ${state === "active" ? "bg-[#323b3d]" : ""}`}
  >
    <svg viewBox="0 0 24 24" className="h-6 w-6" aria-hidden="true">{apps[app]}</svg>
    {state && <span className={state === "active" ? "h-0.5 w-full bg-[#76b9ed]" : "h-0.5 w-[35px] bg-[#76b9ed]"}></span>}
  </button>
);

const Taskbar = () => (
  <div className="flex h-10 shrink-0 items-center bg-[#000c0f] text-white">
    <button aria-label="开始" className="flex h-full w-12 items-center justify-center bg-black">
      <svg viewBox="0 0 16 16" className="h-4 w-4"><path d="m0 2.300 7-1v6.200H0zM8 1.200 16 0v7.500H8zM0 8.500h7v6.200l-7-1zM8 8.500h8V16l-8-1.200z" fill="#fff" /></svg>
    </button>
    <div className="flex h-full w-[344px] items-center bg-[#333] pr-3.5 pl-[9px]">
      <span className="h-[21px] w-[21px] rounded-full border-3 border-white"></span>
      <input
        type="text"
        aria-label="搜索"
        placeholder="在这里输入你要搜索的内容"
        className="ml-1.5 min-w-0 flex-1 bg-transparent text-sm placeholder:text-[#9a9a9a]"
      />
      <svg viewBox="0 0 12 18" className="h-[18px] w-3"><rect x="3.500" y=".5" width="5" height="11" fill="none" stroke="#999" /><path d="M.5 9v5.500h11V9M6 14.500v3M3 17.500h6" fill="none" stroke="#999" /></svg>
    </div>
    <div className="flex h-full items-center gap-[7px] pl-[3px]">
      <TaskButton app="taskView" label="任务视图" />
      <TaskButton app="fan" label="风扇" />
      <TaskButton app="ieWhite" label="浏览器" />
      <TaskButton app="swirlGrey" label="广联达" />
    </div>
    <div className="flex h-full items-center pl-2">
      <TaskButton app="edge" label="Edge" />
      <TaskButton app="ie" label="Internet Explorer" />
      <TaskButton app="explorer" label="文件资源管理器" />
      <TaskButton app="swirlBlue" label="广联达云" state="open" />
      <TaskButton app="ieGreen" label="安全浏览器" state="open" />
      <TaskButton app="ggj" label="钢筋算量" state="active" />
      <TaskButton app="note" label="便笺" state="open" />
      <TaskButton app="calendar" label="日历" state="open" />
    </div>
    <div className="flex h-full flex-1 items-center justify-between pr-1 pl-2 text-xs">
      <span>链接</span>
      <span className="mx-2 text-center leading-[17px]">34%<br />CPU使用</span>
      <svg viewBox="0 0 12 8" className="h-2 w-3"><path d="m.5 7 5.500-5.500L11.500 7" fill="none" stroke="#fff" strokeWidth="1.300" /></svg>
      <svg viewBox="0 0 16 12" className="h-3 w-4"><path d="M5.500 3.500h9v6h-9z" fill="none" stroke="#fff" /><path d="M7 5h6v3H7zM15 5h1v3h-1z" fill="#fff" /><path d="M1.500 0v3M4.500 0v3M0 3h6v2L4 7v4H2.500V7L0 5z" fill="#fff" stroke="#fff" strokeWidth=".6" /></svg>
      <svg viewBox="0 0 14 14" className="h-3.5 w-3.5"><path d="M1 13A12 12 0 0 1 13 1M4 13a9 9 0 0 1 9-9M7 13a6 6 0 0 1 6-6M10 13a3 3 0 0 1 3-3" fill="none" stroke="#ddd" strokeWidth="1.200" /><circle cx="12" cy="12.500" r="1.200" fill="#fff" /></svg>
      <svg viewBox="0 0 16 14" className="h-3.5 w-4"><path d="M.5 4.500H3l4-3.500v12L3 9.500H.5z" fill="none" stroke="#fff" /><path d="M9 5q1 2 0 4M11 3q3 4 0 8M13 1q4 6 0 12" fill="none" stroke="#ddd" /></svg>
      <svg viewBox="0 0 22 13" className="h-[13px] w-[22px]"><path d="M.5.5h21v12H.5z" fill="none" stroke="#fff" /><path d="M3 3.500h16M3 6.500h16" stroke="#fff" strokeDasharray="2 1" /><path d="M5 9.500h12" stroke="#fff" /></svg>
      <span className="text-lg leading-6">A</span>
      <SogouLogo className="h-4 w-4" />
      <time className="ml-1 text-center leading-[19px]">10:06<br />2018/5/20</time>
      <svg viewBox="0 0 16 16" className="mx-2 h-4 w-4"><path d="M.5.5h15v11h-5L8 14.500 5.500 11.500h-5z" fill="none" stroke="#fff" strokeWidth="1.200" /></svg>
      <span className="h-10 w-px bg-[#555]"></span>
    </div>
  </div>
);

export default function App() {
  return (
    <div className="relative flex h-screen flex-col overflow-hidden bg-[#f0f0f0] font-['Noto_Sans','Noto_Sans_CJK_SC',sans-serif] text-xs text-black">
      <TitleBar />
      <MenuBar />
      <MainToolbar />
      <div className="flex min-h-0 flex-1">
        <NavPanel />
        <div className="ml-1.5 flex min-w-0 flex-1 flex-col">
          <EditToolbar />
          <div className="flex min-h-0 flex-1">
            <ComponentPanel />
            <Editor />
          </div>
        </div>
      </div>
      <StatusBar />
      <Taskbar />

      {/* floating windows */}
      <InputDialog />
      <ImeBar />
      <div className="absolute -top-7 left-[1091px] flex h-12 w-12 items-end justify-center rounded-full border-2 border-[#d8d8d8] bg-[#3fc35a] pb-1 text-[11px] leading-4 font-bold text-white shadow-[0_1px_6px_rgba(0,0,0,0.5)]">
        71
      </div>

      {/* red marks round the rebar values */}
      <svg className="pointer-events-none absolute inset-0 h-full w-full" aria-hidden="true">
        <ellipse cx="609" cy="234" rx="95" ry="50" fill="none" stroke="#ff0000" strokeWidth="7" />
        <ellipse cx="988" cy="275" rx="121" ry="28" fill="none" stroke="#ff0000" strokeWidth="7" />
      </svg>
    </div>
  );
}
